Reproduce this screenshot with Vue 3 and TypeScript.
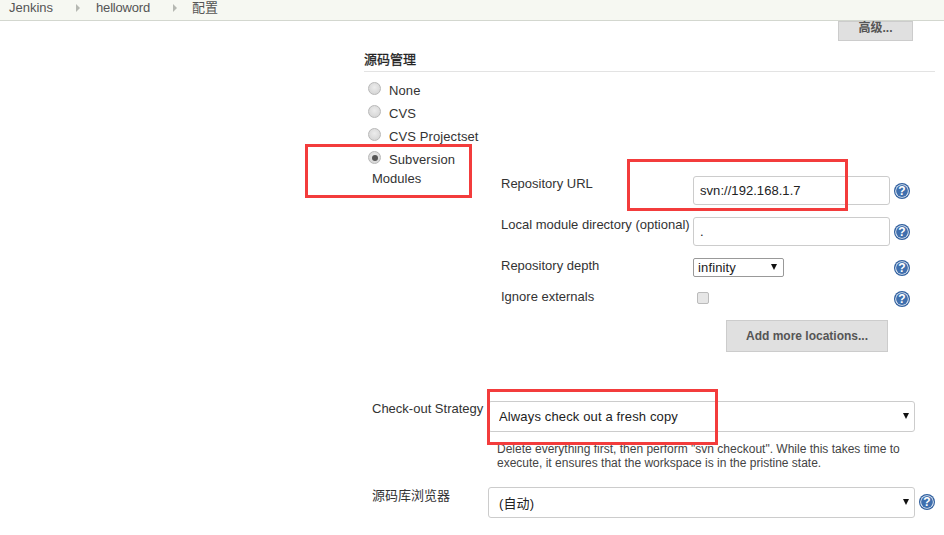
<script setup lang="ts">
const crumbs = ['Jenkins', 'helloword', '配置']
const scms = [
  { label: 'None', checked: false },
  { label: 'CVS', checked: false },
  { label: 'CVS Projectset', checked: false },
  { label: 'Subversion', checked: true },
]
</script>

<template>
  <div class="page">
    <header class="crumbs">
      <template v-for="(c, i) in crumbs" :key="c">
        <span class="crumb" :class="{ tight: i === 1 }">{{ c }}</span>
        <span v-if="i < crumbs.length - 1" class="sep"></span>
      </template>
    </header>

    <main class="main">
      <div class="adv-row"><button class="btn adv">高级...</button></div>

      <h3 class="section">源码管理</h3>

      <div class="radios">
        <label v-for="s in scms" :key="s.label" class="radio-row">
          <span class="radio" :class="{ on: s.checked }"></span>
          <span>{{ s.label }}</span>
        </label>
      </div>

      <div class="modules">
        <div class="modules-label">Modules</div>
        <div class="fields">
          <div class="field f1">
            <span class="flabel">Repository URL</span>
            <input class="text" value="svn://192.168.1.7" />
            <svg class="help" viewBox="0 0 16 16"><circle cx="8" cy="8" r="8" fill="#2f5f9e"/><circle cx="8" cy="8" r="6.8" fill="#e8eef6"/><circle cx="8" cy="8" r="5.9" fill="#3f6fae"/><text x="8" y="12.4" text-anchor="middle" class="q">?</text></svg>
          </div>
          <div class="field f2">
            <span class="flabel">Local module directory (optional)</span>
            <input class="text" value="." />
            <svg class="help" viewBox="0 0 16 16"><circle cx="8" cy="8" r="8" fill="#2f5f9e"/><circle cx="8" cy="8" r="6.8" fill="#e8eef6"/><circle cx="8" cy="8" r="5.9" fill="#3f6fae"/><text x="8" y="12.4" text-anchor="middle" class="q">?</text></svg>
          </div>
          <div class="field f3">
            <span class="flabel">Repository depth</span>
            <div class="sel-wrap small"><select class="sel"><option>infinity</option></select></div>
            <svg class="help" viewBox="0 0 16 16"><circle cx="8" cy="8" r="8" fill="#2f5f9e"/><circle cx="8" cy="8" r="6.8" fill="#e8eef6"/><circle cx="8" cy="8" r="5.9" fill="#3f6fae"/><text x="8" y="12.4" text-anchor="middle" class="q">?</text></svg>
          </div>
          <div class="field f4">
            <span class="flabel">Ignore externals</span>
            <span class="check"></span>
            <svg class="help" viewBox="0 0 16 16"><circle cx="8" cy="8" r="8" fill="#2f5f9e"/><circle cx="8" cy="8" r="6.8" fill="#e8eef6"/><circle cx="8" cy="8" r="5.9" fill="#3f6fae"/><text x="8" y="12.4" text-anchor="middle" class="q">?</text></svg>
          </div>
          <div class="add-row"><button class="btn add">Add more locations...</button></div>
        </div>
      </div>

      <div class="wide w1">
        <span class="wlabel">Check-out Strategy</span>
        <div class="sel-wrap big"><select class="sel"><option>Always check out a fresh copy</option></select></div>
      </div>
      <p class="desc">Delete everything first, then perform "svn checkout". While this takes time to<br />execute, it ensures that the workspace is in the pristine state.</p>
      <div class="wide w2">
        <span class="wlabel">源码库浏览器</span>
        <div class="sel-wrap big b2"><select class="sel"><option>(自动)</option></select></div>
        <svg class="help" viewBox="0 0 16 16"><circle cx="8" cy="8" r="8" fill="#2f5f9e"/><circle cx="8" cy="8" r="6.8" fill="#e8eef6"/><circle cx="8" cy="8" r="5.9" fill="#3f6fae"/><text x="8" y="12.4" text-anchor="middle" class="q">?</text></svg>
      </div>
    </main>

    <div class="mark m1"></div>
    <div class="mark m2"></div>
    <div class="mark m3"></div>
  </div>
</template>

<style>
html, body { margin: 0; background: #fff; }
</style>

<style scoped>
.page {
  position: relative;
  width: 944px;
  height: 535px;
  overflow: hidden;
  background: #fff;
  color: #333;
  font: 13px/15px "Liberation Sans", "Noto Sans CJK SC", sans-serif;
}
.crumbs {
  box-sizing: border-box;
  height: 21px;
  display: flex;
  align-items: flex-start;
  padding: 0 0 0 9px;
  background: #f6f8f2;
  border-bottom: 1px solid #d3d7cf;
  color: #555;
}
.crumb { line-height: 15px; }
.crumb:last-child { margin-left: -1px; }
.tight { letter-spacing: -0.2px; }
.sep {
  width: 0;
  height: 0;
  margin: 4px 16px 0 23px;
  border-left: 4px solid #b5b8b2;
  border-top: 4px solid transparent;
  border-bottom: 4px solid transparent;
}
.main { padding-left: 364px; padding-right: 9px; }
.adv-row { display: flex; justify-content: flex-end; padding-right: 22px; }
.btn {
  box-sizing: border-box;
  background: #e0e0e0;
  border: 1px solid #ccc;
  color: #555;
  font: bold 12px/15px "Liberation Sans", "Noto Sans CJK SC", sans-serif;
  padding: 0;
}
.adv { width: 75px; height: 20px; line-height: 12px; padding-bottom: 8px; }
.section {
  margin: 11px 0 0;
  height: 19px;
  border-bottom: 1px solid #e3e3e3;
  font-size: 13px;
  line-height: 16px;
  font-weight: normal;
  color: #222;
  -webkit-text-stroke: 0.3px #222;
}
.radios { padding: 10px 0 0 4px; display: flex; flex-direction: column; }
.radio-row { height: 23px; display: flex; align-items: flex-start; gap: 8px; letter-spacing: 0.1px; }
.radio-row span:last-child { margin-top: 1px; }
.radio {
  box-sizing: border-box;
  width: 13px;
  height: 13px;
  border-radius: 50%;
  border: 1px solid #b8b8b8;
  background: radial-gradient(circle at 50% 40%, #ececec, #d0d0d0);
  display: flex;
  align-items: center;
  justify-content: center;
}
.radio.on::after {
  content: "";
  width: 6px;
  height: 6px;
  border-radius: 50%;
  background: #555;
}
.modules { display: flex; margin-top: -12px; }
.modules-label { width: 137px; padding: 9px 0 0 8px; box-sizing: border-box; }
.fields { width: 420px; padding-top: 14px; }
.field { display: grid; grid-template-columns: 192px 197px 4px 16px; align-items: start; }
.flabel { white-space: nowrap; }
.text {
  box-sizing: border-box;
  width: 197px;
  height: 29px;
  padding: 0 6px;
  border: 1px solid #ccc;
  border-radius: 3px;
  font: 13px "Liberation Sans", sans-serif;
  letter-spacing: 0.05px;
  color: #222;
  background: #fff;
  outline: none;
  grid-column: 2;
}
.help { width: 16px; height: 16px; grid-column: 4; display: block; }
.q { fill: #fff; font: bold 12px "Liberation Sans", sans-serif; }
.f1, .f2 { height: 41px; }
.f1 .help, .f2 .help { margin-top: 7px; }
.f3 { height: 31px; }
.f3 .sel-wrap { grid-column: 2; }
.f3 .help { margin-top: 2px; }
.f4 { height: 31px; }
.f4 .help { margin-top: 2px; }
.check {
  box-sizing: border-box;
  grid-column: 2;
  width: 12px;
  height: 12px;
  margin: 3px 0 0 4px;
  border: 1px solid #bbb;
  border-radius: 2px;
  background: #e6e6e6;
}
.add-row { padding-left: 225px; }
.add { width: 162px; height: 32px; }
.sel-wrap { position: relative; box-sizing: border-box; }
.sel-wrap::after {
  content: "";
  position: absolute;
  right: 6px;
  top: 50%;
  margin-top: -4px;
  border-top: 6px solid #111;
  border-left: 3px solid transparent;
  border-right: 3px solid transparent;
  pointer-events: none;
}
.sel {
  appearance: none;
  -webkit-appearance: none;
  display: block;
  box-sizing: border-box;
  width: 100%;
  height: 100%;
  background: #fff;
  border: 1px solid #ccc;
  border-radius: 3px;
  font: 13px "Liberation Sans", "Noto Sans CJK SC", sans-serif;
  letter-spacing: 0.14px;
  color: #222;
  padding: 0 10px;
  outline: none;
}
.small { width: 91px; height: 19px; }
.small .sel { border-color: #999; padding: 0 4px; border-radius: 2px; }
.small::after { right: 7px; margin-top: -4px; }
.big { width: 427px; height: 31px; }
.b2 .sel { padding-top: 2px; }
.wide { display: flex; padding-left: 8px; align-items: flex-start; }
.wlabel { width: 116px; white-space: nowrap; flex: none; }
.w1 { margin-top: 49px; }
.w2 { margin-top: 17px; }
.w2 .wlabel { margin-top: 1px; }
.w2 .help { margin: 7px 0 0 4px; flex: none; }
.desc {
  margin: 10px 0 0 133px;
  font-size: 12px;
  line-height: 14px;
  color: #444;
}
.mark {
  position: absolute;
  box-sizing: border-box;
  border: 3px solid #f33c3c;
}
.m1 { left: 305px; top: 144px; width: 167px; height: 54px; }
.m2 { left: 627px; top: 159px; width: 221px; height: 52px; }
.m3 { left: 487px; top: 389px; width: 231px; height: 56px; }
</style>
